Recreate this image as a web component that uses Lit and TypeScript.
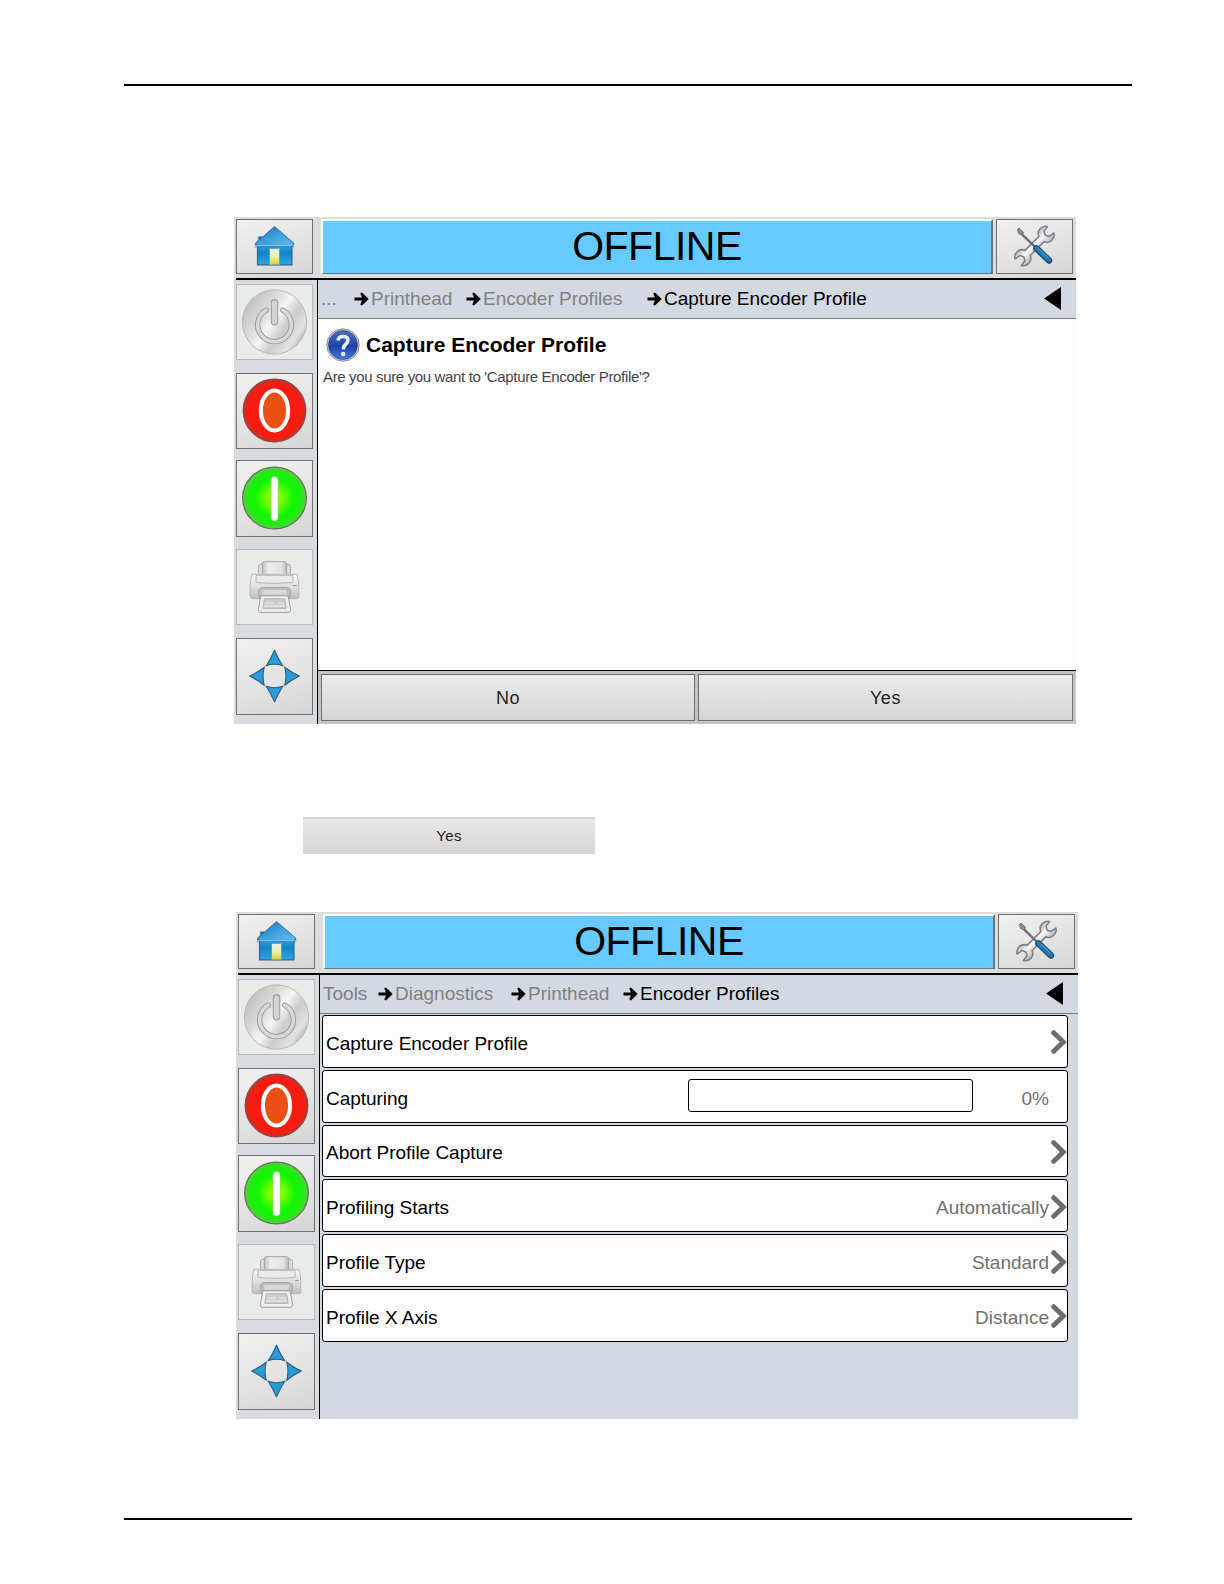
import { LitElement, html, css, svg } from "lit";
import { customElement, property } from "lit/decorators.js";

const homeIcon = svg`<svg class="icon" viewBox="0 0 77 55">
  <defs><linearGradient id="hr" x1="0" y1="0" x2="1" y2="1"><stop offset="0" stop-color="#1d6fa8"/><stop offset=".5" stop-color="#3b9fdc"/><stop offset="1" stop-color="#63b9ea"/></linearGradient>
  <linearGradient id="hb" x1="0" y1="0" x2="0" y2="1"><stop offset="0" stop-color="#2f9ad6"/><stop offset=".4" stop-color="#1583c6"/><stop offset="1" stop-color="#2aa9e4"/></linearGradient>
  <linearGradient id="hd" x1="0" y1="0" x2="0" y2="1"><stop offset="0" stop-color="#e2efee"/><stop offset=".5" stop-color="#edf0b0"/><stop offset="1" stop-color="#d3d42c"/></linearGradient></defs>
  <path d="M38.500 6 L59 24 V28 L57.500 29 V47.500 H20 V29 L18 28 V24 L21 21 V16.500 H27Z" fill="#77749c" opacity=".5"/>
  <path d="M22 17.500h5v7H22z" fill="#1d6fa8"/>
  <path d="M21 26h35.500v20.500H21z" fill="url(#hb)" stroke="#27618f" stroke-width="1"/>
  <path d="M38.500 7 L58.500 24 Q58.500 26.500 56 26.500 H21 Q18 26 19 24 Z" fill="url(#hr)" stroke="#2b72a6" stroke-width="1"/>
  <path d="M20 26.500h37" stroke="#85c9ee" stroke-width="1"/>
  <rect x="33.500" y="29.500" width="10" height="17" fill="url(#hd)" stroke="#5f9f9b" stroke-width=".7"/>
</svg>`;

const toolsIcon = svg`<svg class="icon" viewBox="0 0 77 55">
  <defs><linearGradient id="wg" x1="0" y1="0" x2="1" y2="0"><stop offset="0" stop-color="#b9babf"/><stop offset=".45" stop-color="#f6f6f8"/><stop offset="1" stop-color="#b4b5ba"/></linearGradient></defs>
  <g transform="translate(38.500 27) rotate(45)">
    <path d="M-4.500 -12 L-4.500 12 Q-10 14 -10 20 Q-10 25.500 -5.500 28 L-4.500 21 L0 18.500 L4.500 21 L5.500 28 Q10 25.500 10 20 Q10 14 4.500 12 L4.500 -12 Q10 -14 10 -20 Q10 -25.500 5.500 -28 L4.500 -21 L0 -18.500 L-4.500 -21 L-5.500 -28 Q-10 -25.500 -10 -20 Q-10 -14 -4.500 -12Z" transform="scale(.85)" fill="url(#wg)" stroke="#808086" stroke-width="1.900" stroke-linejoin="round"/>
  </g>
  <path d="M22 11.500 L39 28" stroke="#6f6f75" stroke-width="2.500"/>
  <path d="M20.800 9.500 L22.500 8.500 L27 12.500 L26 15.500 L22 14Z" fill="#8d8d92" stroke="#6f6f75"/>
  <path d="M40.500 29.500 L53.500 42" stroke="#1d5278" stroke-width="6.800" stroke-linecap="round"/>
  <path d="M40.800 29.500 L53.500 41.500" stroke="#2379b0" stroke-width="4.200" stroke-linecap="round"/>
  <path d="M43 30 L53 39.500" stroke="#62abd3" stroke-width="1"/>
</svg>`;

const powerIcon = svg`<svg class="icon" viewBox="0 0 77 76">
  <defs><linearGradient id="pw" x1="0" y1="0" x2="1" y2=".7"><stop offset="0" stop-color="#dedede"/><stop offset=".14" stop-color="#bfbfbf"/><stop offset=".42" stop-color="#dedede"/><stop offset=".56" stop-color="#f6f6f6"/><stop offset=".72" stop-color="#cbcbcb"/><stop offset=".9" stop-color="#e2e2e2"/><stop offset="1" stop-color="#b8b8b8"/></linearGradient></defs>
  <circle cx="38.500" cy="38" r="33" fill="url(#pw)" stroke="#b8b8b8"/>
  <path d="M30 25.800 A17.300 17.300 0 1 0 47 25.800" fill="none" stroke="#9c9c9c" stroke-width="5.600" stroke-linecap="round"/>
  <path d="M30 25.800 A17.300 17.300 0 1 0 47 25.800" fill="none" stroke="#d8d8d8" stroke-width="3.600" stroke-linecap="round"/>
  <rect x="35.200" y="15" width="6.600" height="26" rx="3.300" fill="#d4d4d4" stroke="#9c9c9c" stroke-width="1.100"/>
</svg>`;

const stopIcon = svg`<svg class="icon" viewBox="0 0 77 76">
  <circle cx="38.500" cy="37.500" r="32" fill="#f81c10" stroke="#8e4a48" stroke-width="1.600"/>
  <circle cx="38.500" cy="37.500" r="30" fill="none" stroke="#d92a20" stroke-width="2"/>
  <ellipse cx="38.500" cy="37.500" rx="14" ry="20.500" fill="#ea5014" stroke="#fff" stroke-width="4.200"/>
</svg>`;

const startIcon = svg`<svg class="icon" viewBox="0 0 77 77">
  <defs><radialGradient id="go"><stop offset="0" stop-color="#8cff00"/><stop offset=".25" stop-color="#79fa00"/><stop offset=".6" stop-color="#10f800"/><stop offset=".82" stop-color="#1cee10"/><stop offset="1" stop-color="#55cf3c"/></radialGradient></defs>
  <ellipse cx="38.500" cy="38" rx="32.700" ry="31.800" fill="url(#go)" stroke="#657165" stroke-width="1.300"/>
  <rect x="34.800" y="16" width="7.400" height="45.500" rx="3.700" fill="#fff" stroke="#7fce63" stroke-width=".5"/>
</svg>`;

const printerIcon = svg`<svg class="icon" viewBox="0 0 77 76">
  <defs><linearGradient id="pr" x1="0" y1="0" x2="0" y2="1"><stop offset="0" stop-color="#fafafa"/><stop offset=".55" stop-color="#dcdcdc"/><stop offset="1" stop-color="#bdbdbd"/></linearGradient>
  <linearGradient id="pp" x1="0" y1="0" x2="1" y2="0"><stop offset="0" stop-color="#bfbfbf"/><stop offset=".25" stop-color="#eee"/><stop offset=".8" stop-color="#e2e2e2"/><stop offset="1" stop-color="#b5b5b5"/></linearGradient></defs>
  <rect x="22" y="14.500" width="33" height="12" rx="3" fill="#ddd" stroke="#aaa"/>
  <rect x="26" y="12" width="25" height="16" rx="2" fill="url(#pp)" stroke="#a2a2a2"/>
  <path d="M15.500 25 H61.500 Q63.500 31 63.500 37 V48 Q63.500 50 61 50 H16 Q13.500 50 13.500 48 V37 Q13.500 31 15.500 25Z" fill="url(#pr)" stroke="#b6b6b6"/>
  <path d="M19.500 26 H57.500 V33.500 Q38.500 35 19.500 33.500Z" fill="#ebebeb" stroke="#b2b2b2"/>
  <path d="M22 43 Q22 38.500 27 38.500 H50 Q55 38.500 55 43 L54 50 H23Z" fill="#bebebe" stroke="#a2a2a2"/>
  <path d="M26 41 H51 V46 H26Z" fill="#d8d8d8"/>
  <path d="M24.500 47 H52.500 L55 61 Q55 64 53 64 H24 Q22 64 22 61Z" fill="#eee" stroke="#9a9a9a"/>
  <path d="M28 50 H49 L50.500 60 H26.500Z" fill="#cdcdcd" stroke="#a8a8a8" stroke-width=".8"/>
  <path d="M29 54.500h9m3 0h7M28 57.500h21" stroke="#f2f2f2" stroke-width="1"/>
  <path d="M57.500 36.500h4" stroke="#999"/>
</svg>`;

const moveIcon = svg`<svg class="icon" viewBox="0 0 77 77">
  <g fill="#2b9bd8" stroke="#2c5b7c" stroke-width="1.100" stroke-linejoin="round">
    <path d="M38.500 11.500 Q42 20 47 27.500 Q38.500 24.500 30 27.500 Q35 20 38.500 11.500Z"/>
    <path d="M38.500 64.500 Q42 56.500 47 48.500 Q38.500 51.500 30 48.500 Q35 56.500 38.500 64.500Z"/>
    <path d="M13 38 Q21 34.500 28 29 Q25.500 38 28 47.500 Q21 42 13 38Z"/>
    <path d="M64 38 Q56 34.500 49 29 Q51.500 38 49 47.500 Q56 42 64 38Z"/>
  </g>
  <path d="M28 29 Q29 27.500 30 27.500 M47 27.500 Q49 28 49 29 M49 47.500 Q48.500 48.500 47 48.500 M30 48.500 Q28.500 48.500 28 47.500" fill="none" stroke="#8d979e"/>
</svg>`;

const questionIcon = svg`<svg class="qicon" viewBox="0 0 34 34">
  <defs><linearGradient id="qg" x1="0" y1="0" x2="0" y2="1"><stop offset="0" stop-color="#4a6fc0"/><stop offset=".48" stop-color="#2448ae"/><stop offset=".52" stop-color="#1c3ea6"/><stop offset="1" stop-color="#4276e6"/></linearGradient></defs>
  <circle cx="17" cy="17" r="16.200" fill="#c9ccd2" stroke="#8b8f96"/>
  <circle cx="17" cy="17" r="14.500" fill="url(#qg)" stroke="#2b3f7a" stroke-width=".6"/>
  <path d="M12 12.500 Q12.500 8.500 17 8.500 Q22 8.500 22 12.300 Q22 14.500 19.500 16.500 Q17.300 18.300 17.300 21.500" fill="none" stroke="#e9edf6" stroke-width="3.600"/>
  <circle cx="17.200" cy="26" r="2.300" fill="#e9edf6"/>
</svg>`;

const crumbArrow = svg`<svg class="arrow" viewBox="0 0 15 14"><path d="M0.500 5.400H8L6.200 1.600L8 0.600L14.700 7L8 13.400L6.200 12.400L8 8.600H0.500Z" fill="#000"/></svg>`;
const chevron = svg`<svg class="chev" viewBox="0 0 16 24"><path d="M2.700 2.700L12.300 12L2.700 21.300" fill="none" stroke="#6c6c6c" stroke-width="4.900" stroke-linecap="round" stroke-linejoin="miter"/></svg>`;

interface Crumb { text: string; span: number; current?: boolean }
interface Row { label: string; value?: string; progress?: boolean }

@customElement("hmi-panel")
class HmiPanel extends LitElement {
  @property({ attribute: false }) crumbs: Crumb[] = [];

  static styles = css`
    :host { display: flex; flex-direction: column; width: 842px; height: 507px; background: #d8dbdf; font-family: "Liberation Sans", Arial, sans-serif; font-size: 19px; color: #000; overflow: hidden; }
    * { box-sizing: border-box; }
    .top { display: flex; height: 61px; padding: 2px 3px 0 2px; background: #dcdcdd; }
    .tile { flex: none; width: 77px; height: 77px; border: 1px solid #707070; background: linear-gradient(160deg, #f1f1f1, #e3e3e3 55%, #d5d5d5); }
    .top .tile { height: 55px; }
    .tile.short { height: 76px; }
    .tile.off { height: 76px; border-color: #b8b8b8; background: #e9eaea; }
    .icon { display: block; width: 77px; height: 100%; margin-left: -1px; overflow: visible; }
    .status { flex: none; width: 672px; height: 55px; margin: 0 3px 0 8px; border: 2px solid #fff; border-right-color: #66788a; border-bottom: 1px solid #66788a; background: #66caff; font-size: 41px; letter-spacing: -.500px; line-height: 51px; text-align: center; }
    .rule { flex: none; height: 2px; margin-left: 2px; background: #000; }
    .body { display: flex; flex: 1; min-height: 0; }
    .side { flex: none; width: 83px; padding: 4px 0 0 2px; display: grid; grid-template-rows: 76px 76px 77px 76px 77px; align-content: start; }
    .side { grid-template-rows: 89px 87px 89px 89px 77px; }
    .main { flex: 1; min-width: 0; display: flex; flex-direction: column; border-left: 1px solid #000; background: #d3d9e1; }
    .crumbs { flex: none; display: flex; align-items: center; height: 39px; padding: 0 15px 1px 3px; border-bottom: 1px solid #777; color: #7f8184; }
    .crumb { flex: none; display: flex; align-items: center; white-space: nowrap; }
    .current { color: #000; flex: 1; }
    .arrow { width: 15px; height: 14px; margin-right: 2px; }
    .back { width: 17px; height: 23px; }
  `;

  render() {
    return html`
      <div class="top">
        <div class="tile">${homeIcon}</div>
        <div class="status">OFFLINE</div>
        <div class="tile">${toolsIcon}</div>
      </div>
      <div class="rule"></div>
      <div class="body">
        <div class="side">
          <div class="tile off">${powerIcon}</div>
          <div class="tile short">${stopIcon}</div>
          <div class="tile">${startIcon}</div>
          <div class="tile off">${printerIcon}</div>
          <div class="tile">${moveIcon}</div>
        </div>
        <div class="main">
          <div class="crumbs">
            ${this.crumbs.map((c, i) => html`<div class="crumb ${c.current ? "current" : ""}" style=${c.current ? "" : `width:${c.span}px`}>${i ? crumbArrow : ""}<span>${c.text}</span></div>`)}
            <svg class="back" viewBox="0 0 17 23"><path d="M0 11.500L17 0V23Z"/></svg>
          </div>
          <slot></slot>
        </div>
      </div>`;
  }
}

@customElement("app-root")
class AppRoot extends LitElement {
  static styles = css`
    :host { display: block; width: 1224px; height: 1584px; background: #fff; font-family: "Liberation Sans", Arial, sans-serif; }
    * { box-sizing: border-box; }
    .page { display: flex; flex-direction: column; height: 1584px; padding: 84px 92px 0 124px; align-items: flex-start; }
    .line { flex: none; width: 100%; height: 2px; background: #000; }
    .first { flex: none; margin: 131px 0 0 110px; }
    .second { flex: none; margin: 58px 0 99px 112px; }
    .solo { flex: none; margin: 93px 0 0 179px; width: 292px; height: 37px; border-top: 2px solid #d5d5d5; background: linear-gradient(#e8e8e8, #d5d5d5); text-align: center; font-size: 15px; letter-spacing: .300px; line-height: 34px; color: #222; }
    .dialog { flex: 1; background: #fdfdfd; padding: 8px 5px; }
    .heading { display: flex; align-items: center; gap: 6px; font-size: 21px; font-weight: bold; height: 35px; padding-left: 3px; }
    .qicon { width: 34px; height: 34px; }
    .message { margin-top: 6px; font-size: 15px; letter-spacing: -.350px; line-height: 18px; color: #444; }
    .actions { flex: none; display: grid; grid-template-columns: 374px 1fr; gap: 3px; height: 54px; padding: 3px 3px 3px; border-top: 1px solid #000; background: #c3c4c5; }
    .action { height: 47px; border: 1px solid #6d6d6d; background: linear-gradient(#ebecec, #d5d5d5); text-align: center; font-size: 18px; letter-spacing: .600px; line-height: 46px; color: #222; }
    .rows { display: grid; grid-auto-rows: 52.800px; gap: 2px; padding: 1px 10px 0 2px; }
    .row { display: flex; align-items: center; border: 1px solid #000; border-radius: 3px; background: #fdfdfd; padding: 0 0 0 3px; font-size: 19px; }
    .label { flex: 1; padding-top: 5px; letter-spacing: -.030px; }
    .value { color: #707070; padding-top: 5px; }
    .chev { width: 16px; height: 24px; margin: 2px 0 0 2px; }
    .progress { width: 285px; height: 33px; border: 1px solid #000; border-radius: 3px; margin: 0 49px 2px 0; }
    .pct { margin-right: 18px; }
  `;

  private rows: Row[] = [
    { label: "Capture Encoder Profile" },
    { label: "Capturing", value: "0%", progress: true },
    { label: "Abort Profile Capture" },
    { label: "Profiling Starts", value: "Automatically" },
    { label: "Profile Type", value: "Standard" },
    { label: "Profile X Axis", value: "Distance" },
  ];

  render() {
    return html`<div class="page">
      <div class="line"></div>
      <hmi-panel class="first" .crumbs=${[
        { text: "...", span: 33 },
        { text: "Printhead", span: 112 },
        { text: "Encoder Profiles", span: 181 },
        { text: "Capture Encoder Profile", span: 0, current: true },
      ]}>
        <div class="dialog">
          <div class="heading">${questionIcon}<span>Capture Encoder Profile</span></div>
          <div class="message">Are you sure you want to 'Capture Encoder Profile'?</div>
        </div>
        <div class="actions"><div class="action">No</div><div class="action">Yes</div></div>
      </hmi-panel>
      <div class="solo">Yes</div>
      <hmi-panel class="second" .crumbs=${[
        { text: "Tools", span: 55 },
        { text: "Diagnostics", span: 133 },
        { text: "Printhead", span: 112 },
        { text: "Encoder Profiles", span: 0, current: true },
      ]}>
        <div class="rows">
          ${this.rows.map((r) => html`<div class="row">
            <span class="label">${r.label}</span>
            ${r.progress ? html`<div class="progress"></div>` : ""}
            ${r.value ? html`<span class="value ${r.progress ? "pct" : ""}">${r.value}</span>` : ""}
            ${r.progress ? "" : chevron}
          </div>`)}
        </div>
      </hmi-panel>
      <div class="line"></div>
    </div>`;
  }
}
